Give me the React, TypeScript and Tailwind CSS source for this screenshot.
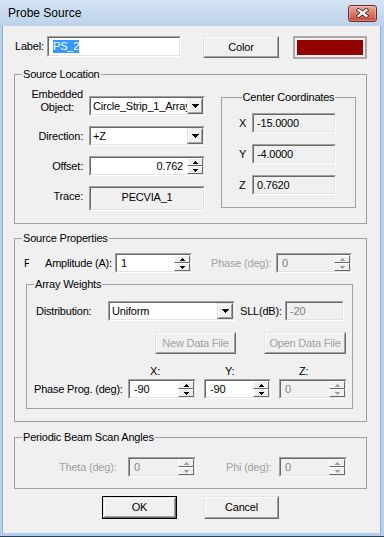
import React from 'react';

type Box = { children?: React.ReactNode; className?: string };

const Sunken = ({ children, className = '', bg = 'bg-white' }: Box & { bg?: string }) => (
  <div className={`flex shrink-0 border border-t-[#a0a0a0] border-l-[#a0a0a0] border-r-white border-b-white ${className}`}>
    <div className={`flex min-w-0 flex-1 border border-t-[#696969] border-l-[#696969] border-r-[#e3e3e3] border-b-[#e3e3e3] ${bg}`}>
      {children}
    </div>
  </div>
);

const Raised = ({ children, className = '' }: Box) => (
  <div className={`flex shrink-0 border border-t-[#e3e3e3] border-l-[#e3e3e3] border-r-[#696969] border-b-[#696969] ${className}`}>
    <div className="flex min-w-0 flex-1 items-center justify-center whitespace-nowrap border border-t-white border-l-white border-r-[#a0a0a0] border-b-[#a0a0a0] bg-[#f0f0f0]">
      {children}
    </div>
  </div>
);

const Tri = ({ up = false, w, h, color }: { up?: boolean; w: number; h: number; color: string }) => (
  <svg width={w} height={h} viewBox={`0 0 ${w} ${h}`} shapeRendering="crispEdges">
    <polygon points={up ? `0,${h} ${w / 2},0 ${w},${h}` : `0,0 ${w},0 ${w / 2},${h}`} fill={color} />
  </svg>
);

const Combo = ({ className = '', value }: { className?: string; value: string }) => (
  <Sunken className={`h-[20px] ${className}`}>
    <div className="min-w-0 flex-1 overflow-hidden whitespace-nowrap pl-[2px] leading-[16px]">{value}</div>
    <Raised className="h-[16px] w-[16px]">
      <Tri w={7} h={4} color="#000" />
    </Raised>
  </Sunken>
);

const SpinBtn = ({ up = false, disabled = false }: { up?: boolean; disabled?: boolean }) => (
  <div className="flex h-[8px] items-center justify-center border border-t-white border-l-white border-r-[#696969] border-b-[#696969] bg-[#f0f0f0]">
    <Tri up={up} w={5} h={3} color={disabled ? '#a0a0a0' : '#000'} />
  </div>
);

const Spin = ({ className = '', value, disabled = false, right = false }: { className?: string; value: string; disabled?: boolean; right?: boolean }) => (
  <Sunken className={`h-[20px] ${className}`} bg={disabled ? 'bg-[#f0f0f0]' : 'bg-white'}>
    <div className={`min-w-0 flex-1 px-[4px] leading-[16px] ${right ? 'text-right' : ''} ${disabled ? 'text-[#808080]' : 'text-black'}`}>{value}</div>
    <div className="flex w-[16px] flex-col">
      <SpinBtn up disabled={disabled} />
      <SpinBtn disabled={disabled} />
    </div>
  </Sunken>
);

const Group = ({ title, className = '', center = false, children }: Box & { title: string; center?: boolean }) => (
  <div className={`shrink-0 border border-[#a0a0a0] ${className}`}>
    <div className={`-mt-[7px] w-fit whitespace-nowrap bg-[#f0f0f0] px-[1px] leading-[13px] text-black ${center ? 'mx-auto' : 'ml-[7px]'}`}>{title}</div>
    {children}
  </div>
);

const ReadOnly = ({ className = '', value }: { className?: string; value: string }) => (
  <Sunken className={`h-[20px] ${className}`} bg="bg-[#f0f0f0]">
    <div className="pl-[3px] leading-[16px]">{value}</div>
  </Sunken>
);

const App = () => {
  return (
    <div className="flex h-[537px] w-[384px] flex-col overflow-hidden bg-[#bcd2ea] font-['Liberation_Sans',Arial,sans-serif] text-[11px] tracking-[-0.2px] text-black">
      {/* title bar */}
      <div className="flex h-[26px] shrink-0 items-center bg-linear-to-b from-[#d6e4f4] to-[#bcd2ea] pl-[8px] pr-[7px]">
        <span className="flex-1 text-[12px] tracking-normal">Probe Source</span>
        <div className="flex h-[17px] w-[29px] items-center justify-center rounded-[3px] border border-[#6e2b22] bg-linear-to-b from-[#eaa99c] to-[#c4473b] shadow-[inset_0_0_0_1px_rgba(255,255,255,0.3)]">
          <svg width="13" height="10" viewBox="0 0 13 10">
            <path d="M2.5 2 L10.5 8 M10.5 2 L2.5 8" stroke="#4b1a14" strokeWidth="3.8" strokeLinecap="square" />
            <path d="M2.5 2 L10.5 8 M10.5 2 L2.5 8" stroke="#fff" strokeWidth="2.2" strokeLinecap="square" />
          </svg>
        </div>
      </div>

      <div className="flex h-[507px] shrink-0">
        <div className="w-[3px] border-r border-[#8fb0d4] bg-[#b9d1ea]" />

        {/* client area */}
        <div className="flex w-[377px] flex-col bg-[#f0f0f0]">
          <div className="mt-[10px] flex items-start">
            <span className="ml-[12px] w-[32px] leading-[21px]">Label:</span>
            <Sunken className="h-[21px] w-[134px]">
              <div className="flex items-center pl-[4px]">
                <span className="bg-[#3399ff] leading-[13px] text-white">PS_2</span>
              </div>
            </Sunken>
            <Raised className="ml-[22px] h-[22px] w-[76px]">Color</Raised>
            <div className="ml-[14px] h-[23px] w-[74px] border-2 border-[#a8a8a8] p-[2px]">
              <div className="h-full bg-[#930000]" />
            </div>
          </div>

          <Group title="Source Location" className="ml-[11px] mt-[15px] h-[150px] w-[353px]">
            <div className="flex items-start">
              <div className="mt-[7px] flex flex-col">
                <div className="flex items-start">
                  <div className="flex w-[68px] justify-end">
                    <span className="text-center leading-[13px]">Embedded<br />Object:</span>
                  </div>
                  <Combo className="ml-[6px] mt-[8px] w-[116px]" value="Circle_Strip_1_Array" />
                </div>
                <div className="mt-[10px] flex items-center">
                  <span className="w-[68px] text-right">Direction:</span>
                  <Combo className="ml-[6px] w-[116px]" value="+Z" />
                </div>
                <div className="mt-[10px] flex items-center">
                  <span className="w-[68px] text-right">Offset:</span>
                  <Spin className="ml-[6px] w-[116px]" value="0.762" right />
                </div>
                <div className="mt-[10px] flex items-start">
                  <span className="w-[68px] pt-[4px] text-right leading-[13px]">Trace:</span>
                  <Sunken className="ml-[6px] h-[25px] w-[116px]" bg="bg-[#f0f0f0]">
                    <div className="flex-1 pt-[3px] text-center leading-[13px]">PECVIA_1</div>
                  </Sunken>
                </div>
              </div>

              <Group title="Center Coordinates" center className="ml-[16px] mt-[16px] h-[111px] w-[135px]">
                <div className="mt-[9px] flex flex-col gap-[11px]">
                  {[['X', '-15.0000'], ['Y', '-4.0000'], ['Z', '0.7620']].map(([k, v]) => (
                    <div key={k} className="flex items-center">
                      <span className="ml-[17px] w-[13px]">{k}</span>
                      <ReadOnly className="w-[84px]" value={v} />
                    </div>
                  ))}
                </div>
              </Group>
            </div>
          </Group>

          <Group title="Source Properties" className="ml-[11px] mt-[14px] h-[184px] w-[353px]">
            <div className="mt-[8px] flex items-center whitespace-nowrap">
              <span className="ml-[9px] w-[5px] overflow-hidden">F</span>
              <span className="ml-[16px] w-[70px]">Amplitude (A):</span>
              <Spin className="w-[77px]" value="1" />
              <span className="ml-[19px] w-[65px] text-[#a0a0a0]">Phase (deg):</span>
              <Spin className="w-[76px]" value="0" disabled />
            </div>

            <Group title="Array Weights" className="ml-[11px] mt-[11px] h-[125px] w-[327px]">
              <div className="mt-[10px] flex items-center whitespace-nowrap">
                <span className="ml-[9px] w-[72px]">Distribution:</span>
                <Combo className="w-[127px]" value="Uniform" />
                <span className="ml-[5px] w-[45px]">SLL(dB):</span>
                <Sunken className="h-[20px] w-[59px]" bg="bg-[#f0f0f0]">
                  <div className="pl-[3px] leading-[16px] text-[#808080]">-20</div>
                </Sunken>
              </div>
              <div className="mt-[11px] flex text-[#a0a0a0]">
                <Raised className="ml-[128px] h-[22px] w-[81px]">New Data File</Raised>
                <Raised className="ml-[28px] h-[22px] w-[82px]">Open Data File</Raised>
              </div>
              <div className="mt-[11px] flex leading-[13px]">
                <span className="ml-[123px] w-[75px]">X:</span>
                <span className="w-[74px]">Y:</span>
                <span>Z:</span>
              </div>
              <div className="mt-[1px] flex items-center whitespace-nowrap">
                <span className="ml-[7px] w-[94px]">Phase Prog. (deg):</span>
                <Spin className="w-[68px]" value="-90" />
                <Spin className="ml-[8px] w-[67px]" value="-90" />
                <Spin className="ml-[8px] w-[68px]" value="0" disabled />
              </div>
            </Group>
          </Group>

          <Group title="Periodic Beam Scan Angles" className="ml-[11px] mt-[15px] h-[52px] w-[353px]">
            <div className="mt-[13px] flex items-center whitespace-nowrap text-[#a0a0a0]">
              <span className="ml-[44px] w-[69px]">Theta (deg):</span>
              <Spin className="w-[68px]" value="0" disabled />
              <span className="ml-[30px] w-[53px]">Phi (deg):</span>
              <Spin className="w-[68px]" value="0" disabled />
            </div>
          </Group>

          <div className="mt-[7px] flex">
            <div className="ml-[99px] border border-black">
              <Raised className="h-[21px] w-[73px]">OK</Raised>
            </div>
            <Raised className="ml-[27px] h-[23px] w-[75px]">Cancel</Raised>
          </div>
        </div>

        <div className="w-[4px] border-l border-[#8fb0d4] bg-[#b9d1ea]" />
      </div>

      <div className="h-[3px] shrink-0 bg-[#b0cdec]" />
      <div className="h-[1px] shrink-0 bg-[#2b3f55]" />
    </div>
  );
};

export default App;
